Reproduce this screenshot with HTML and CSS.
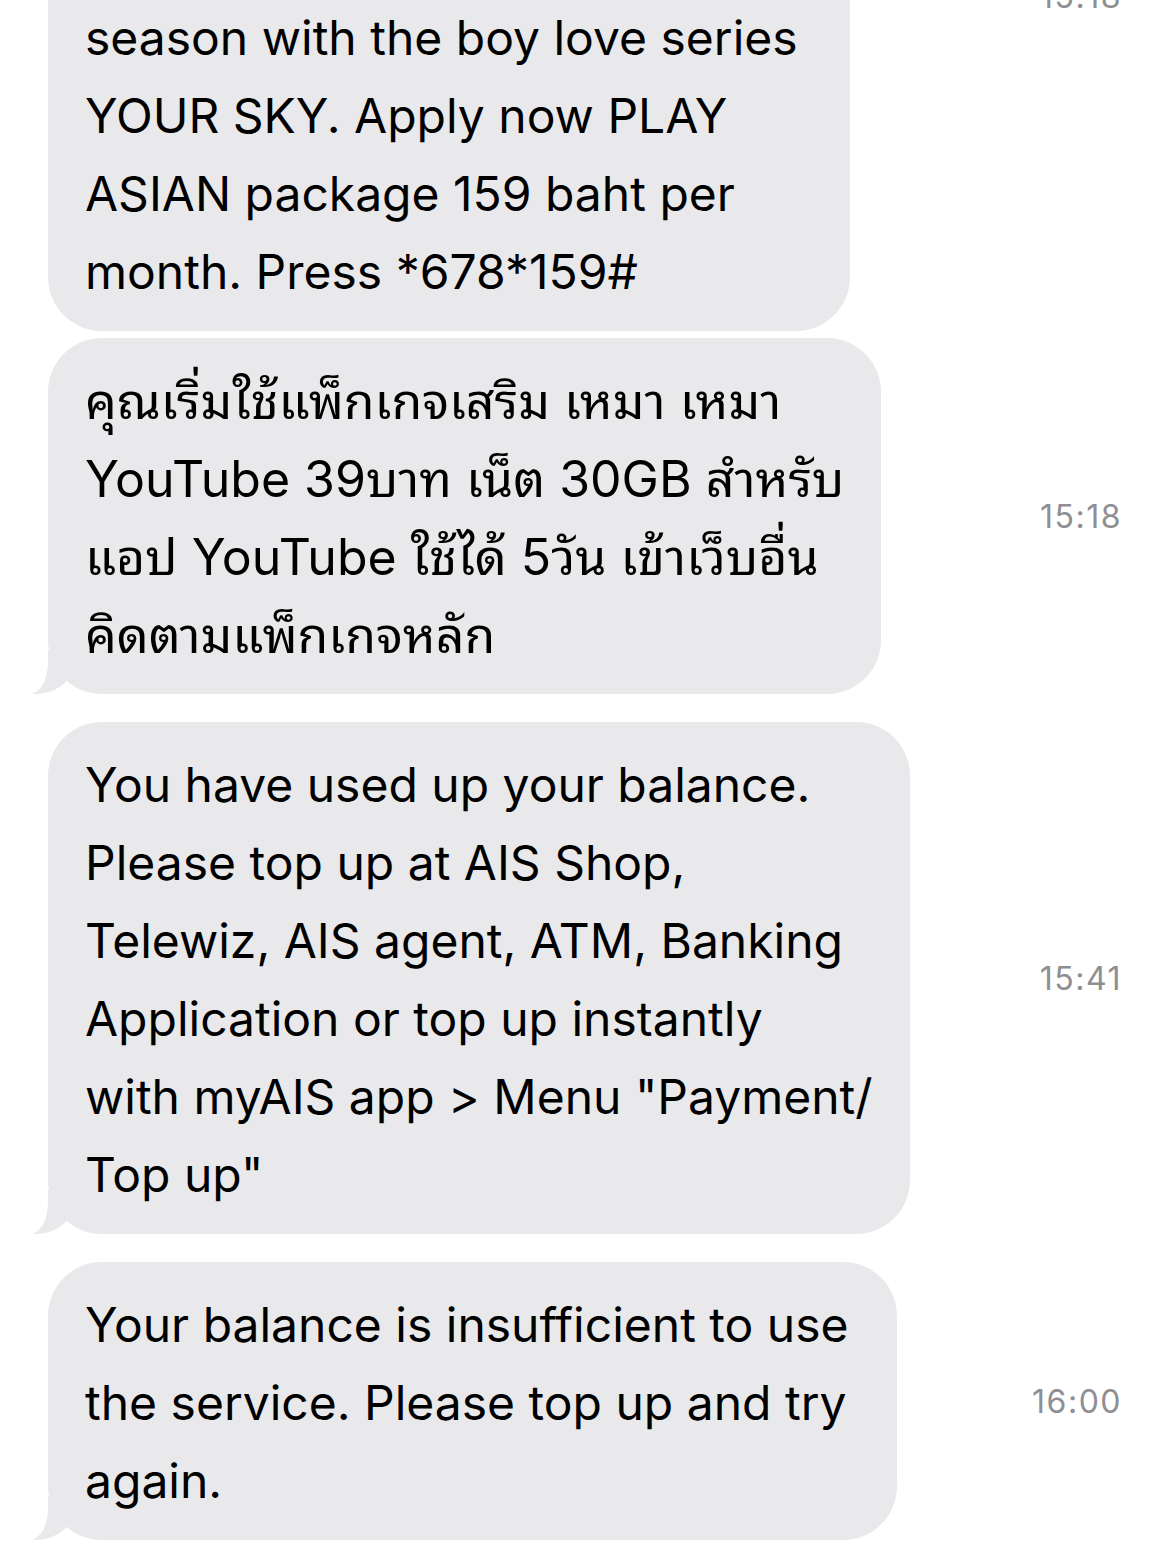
FILE: index.html
```html
<!DOCTYPE html>
<html lang="en">
<head>
    <meta charset="UTF-8">
    <meta name="viewport" content="width=device-width, initial-scale=1.0">
    <title>Messages</title>
    <link rel="stylesheet" href="styles.css">
</head>
<body>
    <div class="thread">
        <div class="msg scrolled">
            <div class="bubble">season with the boy love series<br>YOUR SKY. Apply now PLAY<br>ASIAN package 159 baht per<br>month. Press *678*159#</div>
            <div class="time">15:18</div>
        </div>
        <div class="msg close">
            <div class="bubble tail thai">
                คุณเริ่มใช้แพ็กเกจเสริม เหมา เหมา<br>YouTube 39บาท เน็ต 30GB สำหรับ<br>แอป YouTube ใช้ได้ 5วัน เข้าเว็บอื่น<br>คิดตามแพ็กเกจหลัก
                <svg class="tail-shape" width="60" height="44" viewBox="0 0 60 44"><path d="M16 0 L16 10 Q16 38 0 44 Q20 45 34 32 L42 0 Z"/></svg>
            </div>
            <div class="time">15:18</div>
        </div>
        <div class="msg">
            <div class="bubble tail">
                You have used up your balance.<br>Please top up at AIS Shop,<br>Telewiz, AIS agent, ATM, Banking<br>Application or top up instantly<br>with myAIS app &gt; Menu "Payment/<br>Top up"
                <svg class="tail-shape" width="60" height="44" viewBox="0 0 60 44"><path d="M16 0 L16 10 Q16 38 0 44 Q20 45 34 32 L42 0 Z"/></svg>
            </div>
            <div class="time">15:41</div>
        </div>
        <div class="msg">
            <div class="bubble tail wide">
                Your balance is insufficient to use<br>the service. Please top up and try<br>again.
                <svg class="tail-shape" width="60" height="44" viewBox="0 0 60 44"><path d="M16 0 L16 10 Q16 38 0 44 Q20 45 34 32 L42 0 Z"/></svg>
            </div>
            <div class="time">16:00</div>
        </div>
    </div>
</body>
</html>
```

FILE: styles.css
```css
* {
    box-sizing: border-box;
    margin: 0;
    padding: 0;
}

body {
    background: #fff;
    font-family: Inter, "Noto Sans Thai Looped", "Noto Sans Thai", "Noto Sans", sans-serif;
    font-feature-settings: "calt" 0;
    color: #000;
    overflow: hidden;
}

.thread {
    display: flex;
    flex-direction: column;
    gap: 28px;
    padding: 0 48px 0 48px;
}

.msg {
    display: flex;
    align-items: center;
    justify-content: space-between;
}

.msg.close {
    margin-top: -21px;
}

/* first bubble is partly scrolled off the top */
.msg.scrolled {
    margin-top: -338px;
}

.msg.scrolled .bubble {
    padding-top: 337px;
    padding-right: 52px;
}

.bubble {
    position: relative;
    background: #e9e9eb;
    border-radius: 54px;
    padding: 24px 37px 20px 37px;
    font-size: 48px;
    line-height: 78px;
}

.bubble.thai {
    font-size: 50px;
}

.bubble.wide {
    padding-right: 48px;
}

.tail-shape {
    position: absolute;
    left: -16px;
    bottom: 0;
    fill: #e9e9eb;
}

.time {
    font-size: 32px;
    color: #8e8e93;
    letter-spacing: 1.5px;
}
```
